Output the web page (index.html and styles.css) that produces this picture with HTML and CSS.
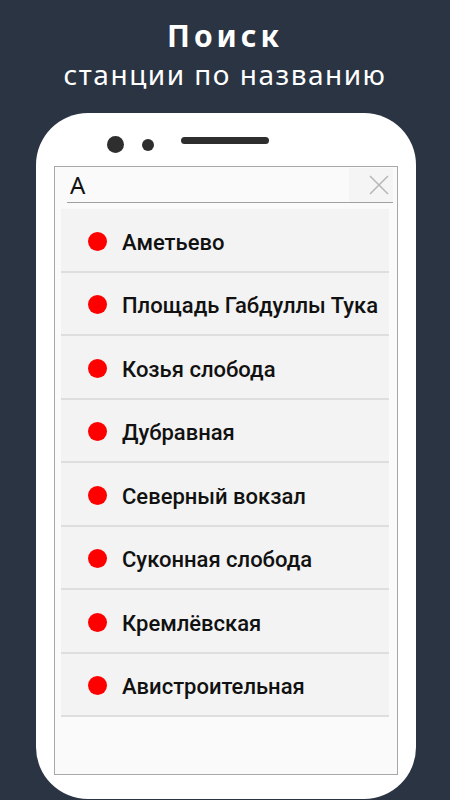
FILE: index.html
```html
<!DOCTYPE html>
<html>
    <head>
        <meta charset="utf-8">
        <title>Поиск станции</title>
        <link rel="stylesheet" href="styles.css">
    </head>
    <body>
        <div class="heading">
            <h1>Поиск</h1>
            <h2>станции по названию</h2>
        </div>
        <div class="phone">
            <div class="phone-top">
                <span class="cam big"></span>
                <span class="cam small"></span>
                <span class="speaker"></span>
            </div>
            <div class="screen">
                <div class="search">
                    <span class="query">А</span>
                    <span class="clear">
                        <svg width="20" height="20" viewBox="0 0 20 20">
                            <path d="M1 1 L19 19 M19 1 L1 19" stroke="#b8b8b8" stroke-width="1.6" fill="none"/>
                        </svg>
                    </span>
                </div>
                <ul class="stations">
                    <li><span class="dot"></span>Аметьево</li>
                    <li><span class="dot"></span>Площадь Габдуллы Тука</li>
                    <li><span class="dot"></span>Козья слобода</li>
                    <li><span class="dot"></span>Дубравная</li>
                    <li><span class="dot"></span>Северный вокзал</li>
                    <li><span class="dot"></span>Суконная слобода</li>
                    <li><span class="dot"></span>Кремлёвская</li>
                    <li><span class="dot"></span>Авистроительная</li>
                </ul>
            </div>
        </div>
    </body>
</html>
```

FILE: styles.css
```css
html, body {
    margin: 0;
    height: 100%;
}

body {
    background: #2a3443;
    font-family: "Noto Sans", "Liberation Sans", sans-serif;
    overflow: hidden;
}

.heading {
    text-align: center;
    color: #fff;
    padding-top: 18px;
}
.heading h1 {
    margin: 0;
    font-size: 30px;
    line-height: 36px;
    font-weight: bold;
    letter-spacing: 4px;
}
.heading h2 {
    margin: 0;
    font-size: 28px;
    line-height: 40px;
    font-weight: normal;
    letter-spacing: 1.5px;
}

.phone {
    margin: 19px 0 0 36px;
    width: 380px;
    height: 686px;
    background: #fff;
    border-radius: 52px;
    box-sizing: border-box;
    padding: 0 18px;
}

.phone-top {
    height: 53px;
    display: flex;
    align-items: center;
    padding-left: 53px;
    padding-top: 10px;
    box-sizing: border-box;
}
.cam {
    display: block;
    border-radius: 50%;
    background: #2e2e2e;
}
.cam.big {
    width: 17px;
    height: 17px;
}
.cam.small {
    width: 12px;
    height: 12px;
    margin-left: 18px;
}
.speaker {
    display: block;
    width: 88px;
    height: 7px;
    border-radius: 4px;
    background: #2e2e2e;
    margin-left: 27px;
    margin-bottom: 8px;
}

.screen {
    height: 609px;
    border: 1px solid #a8a8a8;
    background: #fafafa;
    box-sizing: border-box;
    padding: 0 4px 0 6px;
}

.search {
    display: flex;
    align-items: center;
    justify-content: space-between;
    height: 35px;
    border-bottom: 1.5px solid #a0a0a0;
    margin-left: 6px;
}
.query {
    font-size: 24px;
    color: #111;
    padding-left: 3px;
}
.clear {
    display: flex;
    align-items: center;
    justify-content: flex-end;
    width: 44px;
    height: 34px;
    padding-right: 4px;
    box-sizing: border-box;
    background: #f5f5f5;
}

.stations {
    list-style: none;
    margin: 6px 4px 0 0;
    padding: 0;
}
.stations li {
    display: flex;
    align-items: center;
    height: 63.5px;
    padding-top: 5px;
    box-sizing: border-box;
    background: #f3f3f3;
    border-bottom: 2px solid #dedede;
    font-family: Roboto, "Noto Sans", sans-serif;
    font-weight: 500;
    font-size: 22px;
    color: #111;
    white-space: nowrap;
    overflow: hidden;
}
.dot {
    width: 19px;
    height: 19px;
    border-radius: 50%;
    background: #ff0000;
    margin: -2px 15px 0 27px;
    flex-shrink: 0;
}
```
